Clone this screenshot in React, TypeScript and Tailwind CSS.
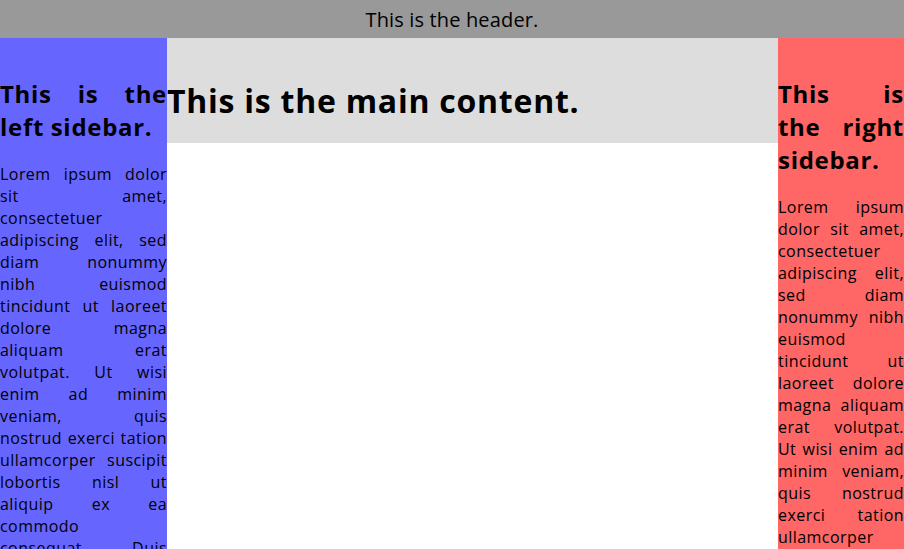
import React from "react";

const leftHead = ["This is the", "left sidebar."];
const rightHead = ["This is", "the right", "sidebar."];

const leftLines = [
  "Lorem ipsum dolor",
  "sit amet,",
  "consectetuer",
  "adipiscing elit, sed",
  "diam nonummy",
  "nibh euismod",
  "tincidunt ut laoreet",
  "dolore magna",
  "aliquam erat",
  "volutpat. Ut wisi",
  "enim ad minim",
  "veniam, quis",
  "nostrud exerci tation",
  "ullamcorper suscipit",
  "lobortis nisl ut",
  "aliquip ex ea",
  "commodo",
  "consequat. Duis",
];

const rightLines = [
  "Lorem ipsum",
  "dolor sit amet,",
  "consectetuer",
  "adipiscing elit,",
  "sed diam",
  "nonummy nibh",
  "euismod",
  "tincidunt ut",
  "laoreet dolore",
  "magna aliquam",
  "erat volutpat.",
  "Ut wisi enim ad",
  "minim veniam,",
  "quis nostrud",
  "exerci tation",
  "ullamcorper",
];

function Line({ text, last }: { text: string; last?: boolean }) {
  const words = text.split(" ");
  const justify = words.length > 1 && !last;
  return (
    <div className={`flex whitespace-nowrap ${justify ? "justify-between" : "justify-start gap-[0.28em]"}`}>
      {words.map((w, i) => (
        <span key={i}>{w}</span>
      ))}
    </div>
  );
}

export default function App() {
  return (
    <div
      className="h-[549px] w-[904px] overflow-hidden bg-white text-black"
      style={{ fontFamily: '"Open Sans", "Noto Sans", sans-serif' }}
    >
      <header className="flex h-[38px] items-center justify-center bg-[#999999] pt-[2px] text-[20px] tracking-[0.15px]">
        This is the header.
      </header>
      <div className="flex">
        <aside className="h-[511px] w-[167px] shrink-0 bg-[#6666ff] pt-[39px]">
          <h2 className="text-[24px] font-bold leading-[33px] tracking-[0.7px]">
            {leftHead.map((l, i) => (
              <Line key={i} text={l} last={i === leftHead.length - 1} />
            ))}
          </h2>
          <div className="mt-[20px] text-[16px] leading-[22px] tracking-[0.45px]">
            {leftLines.map((l, i) => (
              <Line key={i} text={l} />
            ))}
          </div>
        </aside>
        <main className="flex-1">
          <div className="flex h-[105px] items-center bg-[#dddddd] pt-[21px]">
            <h1 className="text-[32px] font-bold leading-[42px] tracking-[0.75px]">
              This is the main content.
            </h1>
          </div>
        </main>
        <aside className="h-[511px] w-[126px] shrink-0 bg-[#ff6666] pt-[39px]">
          <h2 className="text-[24px] font-bold leading-[33px] tracking-[0.7px]">
            {rightHead.map((l, i) => (
              <Line key={i} text={l} last={i === rightHead.length - 1} />
            ))}
          </h2>
          <div className="mt-[20px] text-[16px] leading-[22px] tracking-[0.45px]">
            {rightLines.map((l, i) => (
              <Line key={i} text={l} />
            ))}
          </div>
        </aside>
      </div>
    </div>
  );
}
